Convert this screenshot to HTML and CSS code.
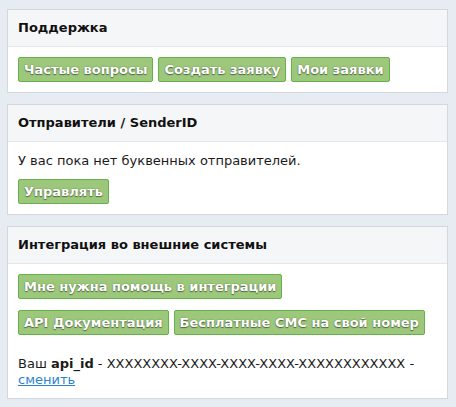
FILE: index.html
```html
<!DOCTYPE html>
<html lang="ru">
<head>
<meta charset="utf-8">
<link rel="stylesheet" href="styles.css">
</head>
<body>
<div class="page">
  <section class="panel">
    <div class="panel-head">Поддержка</div>
    <div class="panel-body">
      <div class="btn-row">
        <a class="btn">Частые вопросы</a>
        <a class="btn">Создать заявку</a>
        <a class="btn">Мои заявки</a>
      </div>
    </div>
  </section>
  <section class="panel">
    <div class="panel-head">Отправители / SenderID</div>
    <div class="panel-body">
      <p class="text">У вас пока нет буквенных отправителей.</p>
      <div class="btn-row">
        <a class="btn">Управлять</a>
      </div>
    </div>
  </section>
  <section class="panel">
    <div class="panel-head">Интеграция во внешние системы</div>
    <div class="panel-body">
      <div class="btn-row">
        <a class="btn">Мне нужна помощь в интеграции</a>
      </div>
      <div class="btn-row spaced">
        <a class="btn">API Документация</a>
        <a class="btn">Бесплатные СМС на свой номер</a>
      </div>
      <p class="api">Ваш <b>api_id</b> - XXXXXXXX-XXXX-XXXX-XXXX-XXXXXXXXXXXX - <a class="link" href="#">сменить</a></p>
    </div>
  </section>
</div>
</body>
</html>
```
FILE: styles.css
```css
html, body {
  margin: 0;
  padding: 0;
  background: #e7ebf2;
}
body {
  font-family: "DejaVu Sans", Verdana, sans-serif;
  font-size: 13px;
  color: #1b1b1b;
}
.page {
  display: flex;
  flex-direction: column;
  gap: 11px;
  padding: 9px 8px 10px 7px;
}
.panel {
  background: #ffffff;
  border: 1px solid #d3d7de;
}
.panel-head {
  height: 36px;
  line-height: 36px;
  padding: 0 10px;
  background: #f5f6f8;
  border-bottom: 1px solid #e3e6eb;
  font-weight: bold;
  font-size: 13px;
  color: #111;
}
.panel-body {
  padding: 10px 10px 10px 10px;
}
.btn-row {
  display: flex;
  gap: 5px;
}
.btn-row.spaced {
  margin-top: 11px;
}
.btn {
  display: inline-block;
  height: 23px;
  line-height: 23px;
  padding: 0 5px;
  background: #9dc87c;
  border: 1px solid #64b24c;
  border-radius: 2px;
  color: #ffffff;
  font-weight: bold;
  font-size: 13px;
  text-shadow: 0 1px 1px rgba(0, 0, 0, 0.45), 0 0 2px rgba(0, 0, 0, 0.3);
  white-space: nowrap;
}
.text {
  margin: 0 0 9px 0;
  line-height: 18px;
}
.api {
  margin: 21px 0 0 0;
  line-height: 16px;
}
.link {
  color: #2b83cf;
  text-decoration: underline;
}
```
